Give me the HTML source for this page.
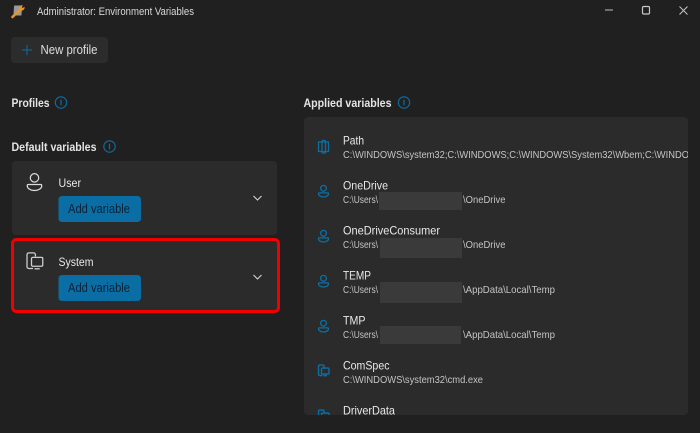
<!DOCTYPE html>
<html><head><meta charset="utf-8"><style>
html,body{margin:0;padding:0;background:#202020;width:700px;height:433px;overflow:hidden}
svg{display:block}
text{font-family:"Liberation Sans",sans-serif;fill:#e6e6e6}
.s{font-size:10.5px;fill:#c4c4c4}
.n{font-size:12px;fill:#e8e8e8}
.h{font-size:12px;font-weight:bold;fill:#e4e4e4}
.b{font-size:12.5px;fill:#062235}
</style></head><body>
<svg width="700" height="433" viewBox="0 0 700 433" xmlns="http://www.w3.org/2000/svg">
<defs>
<g id="u" fill="none" stroke-width="1.300"><circle cx="0" cy="-3.200" r="2.900"/><path d="M-4.300 1.400h8.600c.5 0 .7.400.7.800 0 1.900-2.300 3.300-5 3.300s-5-1.400-5-3.300c0-.4.200-.8.700-.8z"/></g>
<g id="c" fill="none" stroke-width="1.400"><path d="M-1 5h-2.800a1.200 1.200 0 0 1-1.200-1.200v-8a1.200 1.200 0 0 1 1.200-1.200h3.200a1.200 1.200 0 0 1 1.200 1.200v1.200"/><rect x="-2" y="-2.400" width="7.500" height="5.900" rx=".8"/><path d="M0 5.200h3.500"/></g>
<g id="i" fill="none" stroke="#0a6fa5" stroke-width="1.100"><circle r="5.700"/><path d="M0-2.800V2.800" stroke-width="1.200"/></g>
<clipPath id="p"><rect x="304" y="117" width="384" height="298" rx="4"/></clipPath>
</defs>
<rect width="700" height="433" fill="#202020"/>

<!-- title bar -->
<rect x="14.500" y="5.500" width="8" height="10" fill="#9a9a9a" transform="skewX(-4)"/>
<path d="M12.500 17L20.500 9" stroke="#e8962a" stroke-width="2.600" stroke-linecap="round"/>
<path d="M19.500 10a3.200 3.200 0 0 1 3.400-4.800l-1.300 1.800 1.100 1 1.800-1.300a3.200 3.200 0 0 1-5 3.300z" fill="#e8962a"/>
<text x="37" y="15" font-size="11" textLength="157" lengthAdjust="spacingAndGlyphs" style="fill:#d8d8d8">Administrator: Environment Variables</text>
<path d="M605 10h8" stroke="#9a9a9a" stroke-width="1.300"/>
<rect x="642.500" y="6.500" width="7" height="7.500" rx="1.300" fill="none" stroke="#c8c8c8" stroke-width="1.200"/>
<path d="M679.500 6.500l8 8m0-8l-8 8" stroke="#c4c4c4" stroke-width="1"/>

<!-- new profile -->
<rect x="11" y="37" width="97" height="26" rx="4" fill="#2c2c2c"/>
<path d="M27 45v10M22 50h10" stroke="#0e6c9f" stroke-width="1"/>
<text x="40.500" y="54" font-size="12.500" textLength="57" lengthAdjust="spacingAndGlyphs" style="fill:#dedede">New profile</text>

<!-- headings -->
<text class="h" x="11.500" y="107" textLength="38" lengthAdjust="spacingAndGlyphs">Profiles</text>
<use href="#i" x="61" y="102.500"/>
<text class="h" x="11.500" y="151" textLength="85" lengthAdjust="spacingAndGlyphs">Default variables</text>
<use href="#i" x="109.500" y="146.500"/>
<text class="h" x="303.500" y="107" textLength="88" lengthAdjust="spacingAndGlyphs">Applied variables</text>
<use href="#i" x="404" y="102.500"/>

<!-- user card -->
<rect x="12" y="161" width="265" height="74" rx="4" fill="#2b2b2b"/>
<g transform="translate(34.500 182.500) scale(1.450)" fill="none" stroke="#dcdcdc" stroke-width=".85"><circle cx="0" cy="-3.200" r="2.900"/><path d="M-4.300 1.400h8.600c.5 0 .7.400.7.800 0 1.900-2.300 3.300-5 3.300s-5-1.400-5-3.300c0-.4.200-.8.700-.8z"/></g>
<text class="n" x="58.500" y="187" textLength="22.500" lengthAdjust="spacingAndGlyphs">User</text>
<rect x="58.500" y="196" width="82.500" height="26" rx="3.500" fill="#0a6ea5"/>
<text class="b" x="68" y="213" textLength="62" lengthAdjust="spacingAndGlyphs">Add variable</text>
<path d="M253.500 196l4 4 4-4" fill="none" stroke="#d4d4d4" stroke-width="1.100"/>

<!-- system card -->
<rect x="12.500" y="239.500" width="266" height="72" rx="4" fill="#2b2b2b" stroke="#f00000" stroke-width="3"/>
<g transform="translate(34.500 261) scale(1.500)" fill="none" stroke="#cfcfcf" stroke-width=".85"><path d="M-1 5h-2.800a1.200 1.200 0 0 1-1.200-1.200v-8a1.200 1.200 0 0 1 1.200-1.200h3.200a1.200 1.200 0 0 1 1.200 1.200v1.200"/><rect x="-2" y="-2.400" width="7.500" height="5.900" rx=".8"/><path d="M0 5.200h3.500"/></g>
<text class="n" x="58.500" y="266" textLength="35" lengthAdjust="spacingAndGlyphs">System</text>
<rect x="58.500" y="275" width="82.500" height="26" rx="3.500" fill="#0a6ea5"/>
<text class="b" x="68" y="292" textLength="62" lengthAdjust="spacingAndGlyphs">Add variable</text>
<path d="M253.500 275l4 4 4-4" fill="none" stroke="#d4d4d4" stroke-width="1.100"/>

<!-- applied panel -->
<g clip-path="url(#p)">
<rect x="304" y="117" width="384" height="298" fill="#2b2b2b"/>

<path d="M318.500 142h10v9.500h-10zM322 140.500v12.500M325.500 140.500v12.500M322 140.500h3.500M322 153h3.500" fill="none" stroke="#0a6fa5" stroke-width="1.200"/>
<text class="n" x="343" y="144.500" textLength="21" lengthAdjust="spacingAndGlyphs">Path</text>
<text class="s" x="343" y="158" textLength="346" lengthAdjust="spacingAndGlyphs">C:\WINDOWS\system32;C:\WINDOWS;C:\WINDOWS\System32\Wbem;C:\WINDO</text>

<use href="#u" x="323.500" y="191.500" stroke="#0a6fa5"/>
<text class="n" x="343" y="189.500" textLength="45" lengthAdjust="spacingAndGlyphs">OneDrive</text>
<text class="s" x="343" y="203" textLength="35" lengthAdjust="spacingAndGlyphs">C:\Users\</text>
<rect x="379" y="192" width="83" height="18" fill="#3a3a3a"/>
<text class="s" x="463" y="203" textLength="42.500" lengthAdjust="spacingAndGlyphs">\OneDrive</text>

<use href="#u" x="323.500" y="236.500" stroke="#0a6fa5"/>
<text class="n" x="343" y="234.500" textLength="97" lengthAdjust="spacingAndGlyphs">OneDriveConsumer</text>
<text class="s" x="343" y="248" textLength="35" lengthAdjust="spacingAndGlyphs">C:\Users\</text>
<rect x="380" y="238" width="82" height="20" fill="#3a3a3a"/>
<text class="s" x="463" y="248" textLength="42.500" lengthAdjust="spacingAndGlyphs">\OneDrive</text>

<use href="#u" x="323.500" y="281.500" stroke="#0a6fa5"/>
<text class="n" x="343" y="279.500" textLength="28" lengthAdjust="spacingAndGlyphs">TEMP</text>
<text class="s" x="343" y="293" textLength="35" lengthAdjust="spacingAndGlyphs">C:\Users\</text>
<rect x="380" y="282" width="82" height="21" fill="#3a3a3a"/>
<text class="s" x="463" y="293" textLength="92" lengthAdjust="spacingAndGlyphs">\AppData\Local\Temp</text>

<use href="#u" x="323.500" y="326.500" stroke="#0a6fa5"/>
<text class="n" x="343" y="324.500" textLength="22.500" lengthAdjust="spacingAndGlyphs">TMP</text>
<text class="s" x="343" y="338" textLength="35" lengthAdjust="spacingAndGlyphs">C:\Users\</text>
<rect x="380" y="326" width="81" height="18" fill="#3a3a3a"/>
<text class="s" x="463" y="338" textLength="92" lengthAdjust="spacingAndGlyphs">\AppData\Local\Temp</text>

<use href="#c" x="323.500" y="370.500" stroke="#0a6fa5"/>
<text class="n" x="343" y="369.500" textLength="46.500" lengthAdjust="spacingAndGlyphs">ComSpec</text>
<text class="s" x="343" y="383" textLength="140" lengthAdjust="spacingAndGlyphs">C:\WINDOWS\system32\cmd.exe</text>

<use href="#c" x="323.500" y="415.500" stroke="#0a6fa5"/>
<text class="n" x="343" y="414.500" textLength="52" lengthAdjust="spacingAndGlyphs">DriverData</text>
</g>
</svg>
</body></html>
